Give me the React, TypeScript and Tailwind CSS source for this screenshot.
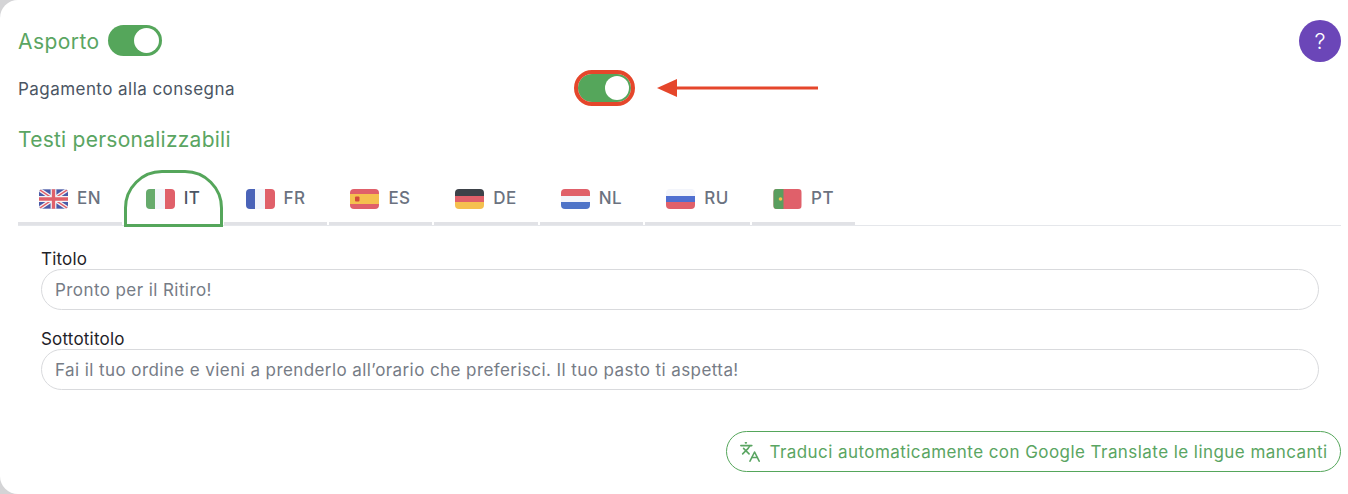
import { Languages } from 'lucide-react';

function UkFlag() {
  return (
    <svg viewBox="0 0 30 20" className="w-full h-full">
      <rect width="30" height="20" fill="#4a5aa8" />
      <path d="M0 0L30 20M30 0L0 20" stroke="#f3f4f6" strokeWidth="4" />
      <path d="M0 0L30 20M30 0L0 20" stroke="#e0606a" strokeWidth="1.4" />
      <path d="M15 0V20M0 10H30" stroke="#f3f4f6" strokeWidth="6" />
      <path d="M15 0V20M0 10H30" stroke="#e0606a" strokeWidth="3.4" />
    </svg>
  );
}

function Flag({ code }: { code: string }) {
  let inner = null;
  if (code === 'EN') inner = <UkFlag />;
  if (code === 'IT')
    inner = (
      <div className="flex h-full">
        <div className="flex-1 bg-[#66aa6c]" />
        <div className="flex-1 bg-[#f3f5fb]" />
        <div className="flex-1 bg-[#e0606a]" />
      </div>
    );
  if (code === 'FR')
    inner = (
      <div className="flex h-full">
        <div className="flex-1 bg-[#4a63b8]" />
        <div className="flex-1 bg-[#f3f5fb]" />
        <div className="flex-1 bg-[#e0606a]" />
      </div>
    );
  if (code === 'ES')
    inner = (
      <svg viewBox="0 0 29 20" className="w-full h-full">
        <rect width="29" height="20" fill="#e0606a" />
        <rect y="5" width="29" height="10" fill="#f5c04f" />
        <rect x="5" y="7.5" width="4.5" height="5" rx="1" fill="#d24a3a" />
      </svg>
    );
  if (code === 'DE')
    inner = (
      <div className="flex flex-col h-full">
        <div className="flex-1 bg-[#3d4249]" />
        <div className="flex-1 bg-[#e0606a]" />
        <div className="flex-1 bg-[#f5c04f]" />
      </div>
    );
  if (code === 'NL')
    inner = (
      <div className="flex flex-col h-full">
        <div className="flex-1 bg-[#e0606a]" />
        <div className="flex-1 bg-[#f3f5fb]" />
        <div className="flex-1 bg-[#4f74c8]" />
      </div>
    );
  if (code === 'RU')
    inner = (
      <div className="flex flex-col h-full">
        <div className="flex-1 bg-[#f3f5fb]" />
        <div className="flex-1 bg-[#4f6fd0]" />
        <div className="flex-1 bg-[#e0606a]" />
      </div>
    );
  if (code === 'PT')
    inner = (
      <svg viewBox="0 0 28 20" className="w-full h-full">
        <rect width="28" height="20" fill="#e0606a" />
        <rect width="10" height="20" fill="#5a9e5e" />
        <circle cx="7" cy="10" r="1.8" fill="#f5c04f" />
      </svg>
    );
  return <div className="w-[29px] h-[20px] rounded-[4px] overflow-hidden shrink-0">{inner}</div>;
}

const TABS = [
  { code: 'EN', width: 'w-[104px]' },
  { code: 'IT', width: 'w-[98px]' },
  { code: 'FR', width: 'w-[103px]' },
  { code: 'ES', width: 'w-[103px]' },
  { code: 'DE', width: 'w-[104px]' },
  { code: 'NL', width: 'w-[103px]' },
  { code: 'RU', width: 'w-[105px]' },
  { code: 'PT', width: 'w-[103px]' },
];

function Field({ label, value }: { label: string; value: string }) {
  return (
    <div>
      <div className="pt-[1px] text-[17px] leading-[20px] tracking-[0.2px] text-[#1f2329]">{label}</div>
      <div className="h-[41px] pt-[2px] rounded-full border border-[#d9dadd] flex items-center px-[13px] text-[17px] tracking-[0.42px] text-[#767c86]">
        {value}
      </div>
    </div>
  );
}

export default function App() {
  return (
    <div className="relative h-[494px] w-full overflow-hidden bg-[#d4d4d6] font-['Inter',sans-serif]">
      <div className="h-full bg-white rounded-l-[18px] pl-[18px] pr-[7px] pt-[25px]">
        <div className="flex items-center justify-between">
          <div className="flex items-center gap-[8px] h-[32px]">
            <span className="mt-[2px] text-[21px] tracking-[0.45px] text-[#5aa562]">Asporto</span>
            <div className="w-[54px] h-[31px] mb-[2px] rounded-full bg-[#55a65b] flex items-center justify-end pr-[3px]">
              <div className="w-[25px] h-[25px] rounded-full bg-white" />
            </div>
          </div>
          <div className="w-[42px] h-[42px] -my-[5px] rounded-full bg-[#6b46b8] flex items-center justify-center text-[22px] font-light text-white">
            ?
          </div>
        </div>

        <div className="flex items-center h-[36px] mt-[14px]">
          <span className="w-[560px] mt-[2px] text-[17px] tracking-[0.45px] text-[#4b5563]">Pagamento alla consegna</span>
          <div className="w-[53px] h-[28px] mb-[3px] ml-[-0.5px] rounded-full bg-[#55a65b] flex items-center justify-end pr-[2px] outline-[4px] outline-[#e5462b]">
            <div className="w-[24px] h-[24px] rounded-full bg-white" />
          </div>
          <svg width="164" height="22" viewBox="0 0 164 22" className="ml-[23px] mb-[3px]">
            <path d="M3 11L23 2V20Z" fill="#e5462b" />
            <path d="M20 11H164" stroke="#e5462b" strokeWidth="3" />
          </svg>
        </div>

        <div className="mt-[18px] text-[21px] leading-[30px] tracking-[0.25px] text-[#5aa562]">Testi personalizzabili</div>

        <div className="mt-[24px] flex gap-[2px] border-b border-[#e5e7eb] h-[47px]">
          {TABS.map((t) => (
            <div
              key={t.code}
              className={`${t.width} h-[46px] pb-[3px] rounded-t-[4px] border-b-[3px] flex items-center justify-center gap-[9px] text-[17px] tracking-[0.4px] font-medium ${
                t.code === 'IT' ? 'text-[#4b5563] border-transparent' : 'text-[#6b7280] border-[#e1e2e6]'
              }`}
            >
              <Flag code={t.code} />
              {t.code}
            </div>
          ))}
        </div>

        <div className="pl-[23px] pr-[22px] pt-[22px] flex flex-col gap-[18px]">
          <Field label="Titolo" value="Pronto per il Ritiro!" />
          <Field
            label="Sottotitolo"
            value="Fai il tuo ordine e vieni a prenderlo all’orario che preferisci. Il tuo pasto ti aspetta!"
          />
        </div>

        <div className="flex justify-end mt-[41px]">
          <div className="h-[41px] w-[615px] pt-[2px] rounded-full border border-[#55a65b] flex items-center justify-center gap-[8px] text-[17px] tracking-[0.44px] text-[#5aa562]">
            <Languages size={22} strokeWidth={1.75} className="-mt-[2px]" />
            Traduci automaticamente con Google Translate le lingue mancanti
          </div>
        </div>
      </div>

      {/* green highlight drawn over the active tab */}
      <div className="absolute left-[124px] top-[170px] w-[99px] h-[57px] border-[3px] rounded-t-[38px] border-[#55a65b]" />
    </div>
  );
}
